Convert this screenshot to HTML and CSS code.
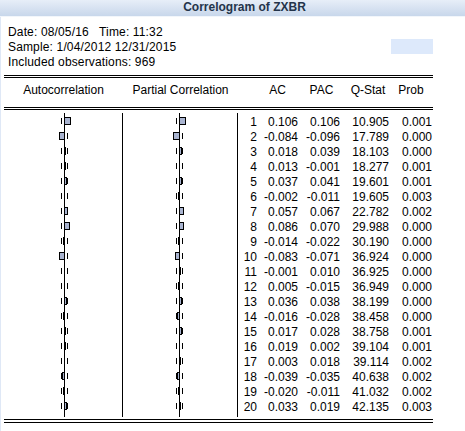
FILE: index.html
```html
<!DOCTYPE html>
<html lang="en">
<head>
  <meta charset="UTF-8">
  <title>Correlogram of ZXBR</title>
  <link rel="stylesheet" href="styles.css">
</head>
<body>
  <div class="window">
    <div class="titlebar">Correlogram of ZXBR</div>

    <div class="content">
      <!-- header info -->
      <div class="info">
        <div class="info-text">
          <div class="line">Date: 08/05/16   Time: 11:32</div>
          <div class="line">Sample: 1/04/2012 12/31/2015</div>
          <div class="line">Included observations: 969</div>
        </div>
        <div class="swatch"></div>
      </div>

      <!-- correlogram table -->
      <div class="correlogram">
        <div class="corr-head">
          <div>Autocorrelation</div>
          <div>Partial Correlation</div>
          <div></div>
          <div>AC</div>
          <div class="h-pac">PAC</div>
          <div class="h-q">Q-Stat</div>
          <div>Prob</div>
        </div>
        <div class="corr-body" id="rows"></div>
      </div>
    </div>
  </div>

  <script>
    const data = [
      [1,  '0.106',  '0.106', '10.905', '0.001'],
      [2,  '-0.084', '-0.096', '17.789', '0.000'],
      [3,  '0.018',  '0.039', '18.103', '0.000'],
      [4,  '0.013',  '-0.001', '18.277', '0.001'],
      [5,  '0.037',  '0.041', '19.601', '0.001'],
      [6,  '-0.002', '-0.011', '19.605', '0.003'],
      [7,  '0.057',  '0.067', '22.782', '0.002'],
      [8,  '0.086',  '0.070', '29.988', '0.000'],
      [9,  '-0.014', '-0.022', '30.190', '0.000'],
      [10, '-0.083', '-0.071', '36.924', '0.000'],
      [11, '-0.001', '0.010', '36.925', '0.000'],
      [12, '0.005',  '-0.015', '36.949', '0.000'],
      [13, '0.036',  '0.038', '38.199', '0.000'],
      [14, '-0.016', '-0.028', '38.458', '0.000'],
      [15, '0.017',  '0.028', '38.758', '0.001'],
      [16, '0.019',  '0.002', '39.104', '0.001'],
      [17, '0.003',  '0.018', '39.114', '0.002'],
      [18, '-0.039', '-0.035', '40.638', '0.002'],
      [19, '-0.020', '-0.011', '41.032', '0.002'],
      [20, '0.033',  '0.019', '42.135', '0.003']
    ];
    const SCALE = 58;

    // bar for one coefficient
    function bar(str) {
      const v = parseFloat(str);
      const w = Math.round(Math.abs(v) * SCALE);
      if (!w) return '';
      const left = v > 0 ? 0 : -w;
      return `<span class="bar" style="left:${left}px;width:${w + 1}px"></span>`;
    }

    function chart(cls, v) {
      return `<div class="chart ${cls}"><div class="axis">` +
             `<span class="dash lo"></span><span class="dash hi"></span>${bar(v)}</div></div>`;
    }

    document.getElementById('rows').innerHTML = data.map(r =>
      `<div class="corr-row">${chart('ac', r[1])}${chart('pac', r[2])}` +
      `<div class="num">${r[0]}</div><div class="num">${r[1]}</div>` +
      `<div class="num">${r[2]}</div><div class="num">${r[3]}</div>` +
      `<div class="num">${r[4]}</div></div>`
    ).join('');
  </script>
</body>
</html>
```

FILE: styles.css
```css
:root {
  --title-top: #e7eef8;
  --title-bottom: #c8d7eb;
  --frame: #dfe8f6;
  --bar-fill: #a9b4d0;
  --font-base: 'Liberation Sans', Arial, sans-serif;
}
* { box-sizing: border-box; }
body {
  margin: 0;
  font-family: var(--font-base);
  font-size: 12px;
  color: #000;
  background: #fff;
}
.window { width: 465px; }

/* title bar */
.titlebar {
  height: 17px;
  line-height: 15px;
  padding-left: 24px;
  text-align: center;
  font-weight: bold;
  color: #24344a;
  background: linear-gradient(var(--title-top), var(--title-bottom));
  border-bottom: 1px solid #f2f6fb;
}

.content {
  border-left: 1px solid var(--frame);
  padding: 8px 0 0 3px;
  min-height: 414px;
}

/* info block */
.info {
  width: 429px;
  display: flex;
  justify-content: space-between;
  align-items: flex-start;
}
.info-text {
  padding-left: 4px;
  line-height: 15px;
  letter-spacing: 0.15px;
}
.info-text .line { white-space: pre; }
.swatch {
  width: 42px; height: 15px;
  margin-top: 14px;
  background: #dde9fb;
}

/* table */
.correlogram {
  width: 429px;
  margin-top: 5px;
  border-top: 3px double #000;
  border-bottom: 4px double #000;
  padding-bottom: 6px;
}
.corr-head,
.corr-row {
  display: grid;
  grid-template-columns: 119px 115px 19px 41px 42px 49px 44px;
}
.corr-head {
  padding: 5px 0 9px;
  line-height: 15px;
  text-align: center;
  border-bottom: 3px double #000;
}
.corr-head .h-pac { padding-left: 5px; }
.corr-head .h-q { padding-left: 7px; }

.corr-body { padding-top: 3px; }
.corr-row { height: 15px; }

.chart {
  position: relative;
  border-right: 1px solid #000;
}
.chart.ac { --axis: 60px; }
.chart.pac { --axis: 56px; }
.chart .axis {
  position: absolute;
  left: var(--axis);
  top: 0; bottom: 0;
  width: 1px;
  background: #000;
}
.dash {
  position: absolute;
  top: 5px;
  width: 1px; height: 6px;
  background: #000;
}
.dash.lo { left: -3px; }
.dash.hi { left: 3px; }
.bar {
  position: absolute;
  top: 4px;
  height: 8px;
  background: var(--bar-fill);
  border: 1px solid #000;
}

.num {
  text-align: right;
  line-height: 19px;
  white-space: nowrap;
}
.num:last-child { padding-right: 1px; }
```
